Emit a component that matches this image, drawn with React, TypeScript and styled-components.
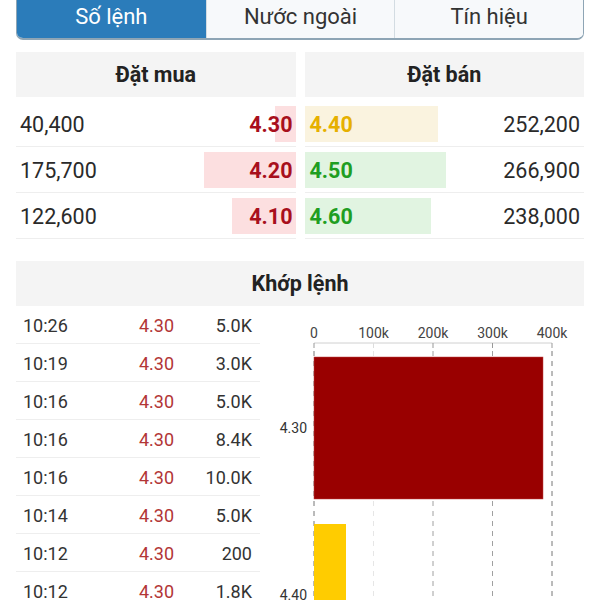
import React from 'react';
import styled, { createGlobalStyle } from 'styled-components';

const GlobalStyle = createGlobalStyle`
  html, body { margin: 0; padding: 0; background: #fff; }
  body { font-family: Roboto, "Noto Sans", "Liberation Sans", sans-serif; overflow: hidden; }
  * { box-sizing: border-box; }
`;

const Page = styled.div`
  width: 600px;
  padding: 0 16px;
`;

const TabBar = styled.div`
  margin-top: -6px;
  height: 46px;
  display: grid;
  grid-template-columns: repeat(3, 1fr);
  border: 1px solid #8ea5b5;
  border-bottom-width: 2px;
  border-radius: 7px;
  overflow: hidden;
`;

const Tab = styled.div<{ $active?: boolean }>`
  display: flex;
  align-items: center;
  justify-content: center;
  font-size: 22px;
  background: ${(p) => (p.$active ? '#2b7cba' : '#f7f9fb')};
  color: ${(p) => (p.$active ? '#ffffff' : '#333333')};
  & + & {
    border-left: 1px solid #d3dce2;
  }
`;

const OrderBook = styled.div`
  margin-top: 12px;
  display: grid;
  grid-template-columns: 1fr 1fr;
  column-gap: 9px;
`;

const Column = styled.div`
  display: flex;
  flex-direction: column;
`;

const SectionHeader = styled.div<{ $h: number }>`
  height: ${(p) => p.$h}px;
  background: #f4f4f4;
  color: #222;
  font-weight: 700;
  font-size: 21.5px;
  display: flex;
  align-items: center;
  justify-content: center;
`;

const BookHeader = styled(SectionHeader)`
  margin-bottom: 4px;
`;

const BookRow = styled.div<{ $side: 'buy' | 'sell'; $bar: number; $tint: string }>`
  height: 46px;
  border-bottom: 1px solid #eeeeee;
  display: flex;
  align-items: center;
  justify-content: space-between;
  padding: ${(p) => (p.$side === 'buy' ? '2px 3px 0 4px' : '2px 4px 0 5px')};
  font-size: 21.5px;
  color: #2a2a2a;
  background-image: linear-gradient(${(p) => p.$tint}, ${(p) => p.$tint});
  background-repeat: no-repeat;
  background-size: ${(p) => p.$bar}px 36px;
  background-position: ${(p) => (p.$side === 'buy' ? 'right center' : 'left center')};
`;

const Price = styled.span<{ $color: string }>`
  font-weight: 700;
  color: ${(p) => p.$color};
`;

const Trades = styled.div`
  margin-top: 22px;
`;

const TradesBody = styled.div`
  display: grid;
  grid-template-columns: 244px 1fr;
`;

const TradeList = styled.div`
  display: flex;
  flex-direction: column;
`;

const TradeRow = styled.div`
  height: 38px;
  flex-shrink: 0;
  border-bottom: 1px solid #eeeeee;
  display: grid;
  grid-template-columns: 116px 1fr auto;
  align-items: center;
  padding: 1px 8px 0 7px;
  font-size: 18px;
  color: #333;
`;

const TradePrice = styled.span`
  color: #b23636;
`;

const ChartWrap = styled.div`
  height: 310px;
  overflow: hidden;
`;

const RED = '#a80f1c';
const YELLOW = '#e6b000';
const GREEN = '#1f9e22';

const buys = [
  { qty: '40,400', price: '4.30', bar: 21 },
  { qty: '175,700', price: '4.20', bar: 92 },
  { qty: '122,600', price: '4.10', bar: 64 },
];

const sells = [
  { qty: '252,200', price: '4.40', bar: 133, color: YELLOW, tint: '#faf3df' },
  { qty: '266,900', price: '4.50', bar: 141, color: GREEN, tint: '#e1f4e1' },
  { qty: '238,000', price: '4.60', bar: 126, color: GREEN, tint: '#e1f4e1' },
];

const trades = [
  ['10:26', '4.30', '5.0K'],
  ['10:19', '4.30', '3.0K'],
  ['10:16', '4.30', '5.0K'],
  ['10:16', '4.30', '8.4K'],
  ['10:16', '4.30', '10.0K'],
  ['10:14', '4.30', '5.0K'],
  ['10:12', '4.30', '200'],
  ['10:12', '4.30', '1.8K'],
];

const X0 = 54;
const UNIT = 59.5;
const ticks = [0, 1, 2, 3, 4];

const Chart: React.FC = () => (
  <svg width="324" height="310" viewBox="0 0 324 310">
    {ticks.map((t) => (
      <text
        key={`l${t}`}
        x={X0 + t * UNIT}
        y={32}
        textAnchor="middle"
        fontSize="14"
        fill="#444"
        fontFamily="Roboto, sans-serif"
      >
        {t === 0 ? '0' : `${t * 100}k`}
      </text>
    ))}
    <line x1={X0} x2={X0 + 4 * UNIT} y1={37} y2={37} stroke="#d0d0d0" strokeWidth="1" />
    {ticks.map((t) => (
      <g key={`g${t}`}>
        <line
          x1={X0 + t * UNIT}
          x2={X0 + t * UNIT}
          y1={37}
          y2={42}
          stroke={t === 1 ? '#dddddd' : '#999999'}
          strokeWidth="1"
        />
        <line
          x1={X0 + t * UNIT}
          x2={X0 + t * UNIT}
          y1={45}
          y2={310}
          stroke={t === 1 ? '#e6e6e6' : t === 0 || t === 4 ? '#777777' : '#a0a0a0'}
          strokeWidth="1"
          strokeDasharray="5 5"
        />
      </g>
    ))}
    <rect x={X0} y={51} width={229} height={142} fill="#990000" stroke="#c04040" strokeWidth="0.5" />
    <rect x={X0} y={218} width={32} height={142} fill="#ffcc00" />
    <text x={47} y={127} textAnchor="end" fontSize="14" fill="#333" fontFamily="Roboto, sans-serif">
      4.30
    </text>
    <text x={47} y={294} textAnchor="end" fontSize="14" fill="#333" fontFamily="Roboto, sans-serif">
      4.40
    </text>
  </svg>
);

export default function App() {
  return (
    <>
      <GlobalStyle />
      <Page>
        <TabBar>
          <Tab $active>Số lệnh</Tab>
          <Tab>Nước ngoài</Tab>
          <Tab>Tín hiệu</Tab>
        </TabBar>

        <OrderBook>
          <Column>
            <BookHeader $h={45}>Đặt mua</BookHeader>
            {buys.map((b) => (
              <BookRow key={b.price} $side="buy" $bar={b.bar} $tint="#fcdfe0">
                <span>{b.qty}</span>
                <Price $color={RED}>{b.price}</Price>
              </BookRow>
            ))}
          </Column>
          <Column>
            <BookHeader $h={45}>Đặt bán</BookHeader>
            {sells.map((s) => (
              <BookRow key={s.price} $side="sell" $bar={s.bar} $tint={s.tint}>
                <Price $color={s.color}>{s.price}</Price>
                <span>{s.qty}</span>
              </BookRow>
            ))}
          </Column>
        </OrderBook>

        <Trades>
          <SectionHeader $h={45}>Khớp lệnh</SectionHeader>
          <TradesBody>
            <TradeList>
              {trades.map(([time, price, vol], i) => (
                <TradeRow key={i}>
                  <span>{time}</span>
                  <TradePrice>{price}</TradePrice>
                  <span>{vol}</span>
                </TradeRow>
              ))}
            </TradeList>
            <ChartWrap>
              <Chart />
            </ChartWrap>
          </TradesBody>
        </Trades>
      </Page>
    </>
  );
}
